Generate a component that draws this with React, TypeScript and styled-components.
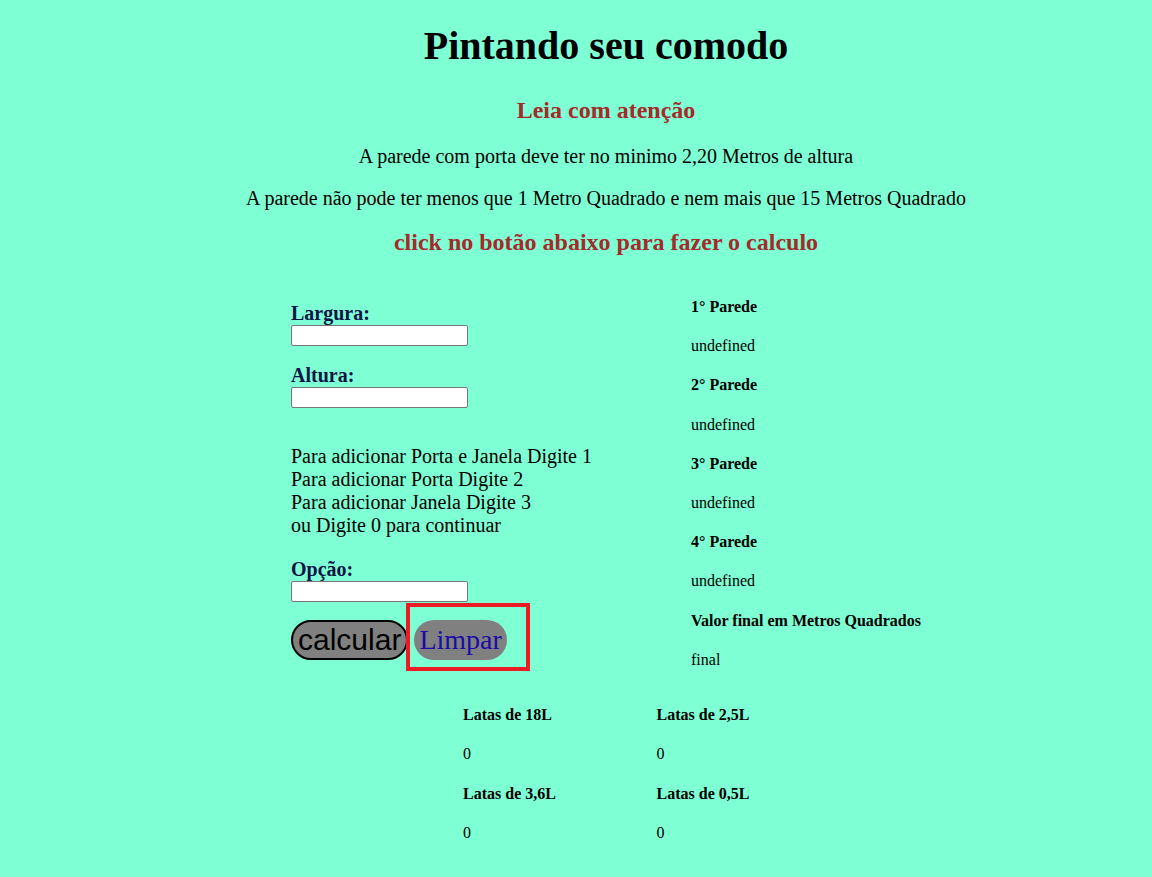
import React from "react";
import styled, { createGlobalStyle } from "styled-components";

const GlobalStyle = createGlobalStyle`
  html, body {
    margin: 0;
    padding: 0;
    background: #7fffd4;
  }
  body {
    font-family: "Liberation Serif", "Times New Roman", serif;
    color: #000;
  }
`;

const Page = styled.div`
  min-height: 877px;
  background: #7fffd4;
  padding-top: 23px;
  box-sizing: border-box;
`;

const Header = styled.header`
  padding-left: 60px;
  text-align: center;
`;

const Title = styled.h1`
  font-size: 40px;
  font-weight: bold;
  margin: 0;
  line-height: 46px;
`;

const Warn = styled.h2<{ $top: number }>`
  font-size: 24px;
  font-weight: bold;
  color: #a52a2a;
  margin: ${(p) => p.$top}px 0 0;
  line-height: 28px;
`;

const Note = styled.p<{ $top: number }>`
  font-size: 20px;
  margin: ${(p) => p.$top}px 0 0;
  line-height: 23px;
`;

const Main = styled.main`
  display: flex;
  align-items: flex-start;
  margin: 42px 0 0 291px;
`;

const FormColumn = styled.section`
  width: 400px;
  padding-top: 4px;
  display: flex;
  flex-direction: column;
  align-items: flex-start;
`;

const Label = styled.label<{ $top?: number }>`
  display: block;
  font-size: 20px;
  font-weight: bold;
  color: #0e1446;
  line-height: 23px;
  margin-top: ${(p) => p.$top ?? 0}px;
`;

const Field = styled.input`
  box-sizing: border-box;
  width: 177px;
  height: 21px;
  margin: 0;
  padding: 1px 2px;
  border: 1px solid #767676;
  border-radius: 2px;
  background: #fff;
  font-size: 13px;
`;

const Instructions = styled.div`
  margin-top: 37px;
  font-size: 20px;
  line-height: 23px;
`;

const ButtonRow = styled.div`
  position: relative;
  display: flex;
  gap: 6px;
  margin-top: 18px;
`;

const CalcButton = styled.button`
  box-sizing: border-box;
  height: 40px;
  margin: 0;
  padding: 0 5px;
  border: 2px solid #000;
  border-radius: 20px;
  background: #808080;
  color: #000;
  font-family: "Liberation Sans", Arial, sans-serif;
  font-size: 30px;
  line-height: 36px;
`;

const ClearButton = styled.button`
  box-sizing: border-box;
  height: 40px;
  margin: 0;
  padding: 0 5px;
  border: none;
  border-radius: 20px;
  background: #808080;
  color: #1a0ca6;
  font-family: "Liberation Serif", "Times New Roman", serif;
  font-size: 28px;
  line-height: 40px;
`;

const Highlight = styled.div`
  position: absolute;
  left: 115px;
  top: -17px;
  width: 124px;
  height: 68px;
  box-sizing: border-box;
  border: 4px solid #ed1c24;
  pointer-events: none;
`;

const ResultColumn = styled.section`
  display: flex;
  flex-direction: column;
  gap: 20.8px;
`;

const ResultTitle = styled.h4`
  font-size: 16px;
  font-weight: bold;
  margin: 0;
  line-height: 18.4px;
`;

const ResultValue = styled.p`
  font-size: 16px;
  margin: 0;
  line-height: 18.4px;
`;

const CansGrid = styled.section`
  display: grid;
  grid-template-columns: 193.5px 193.5px;
  row-gap: 20.8px;
  margin: 37px 0 0 463px;
`;

const walls = ["1° Parede", "2° Parede", "3° Parede", "4° Parede"];

export default function App() {
  return (
    <Page>
      <GlobalStyle />
      <Header>
        <Title>Pintando seu comodo</Title>
        <Warn $top={27}>Leia com atenção</Warn>
        <Note $top={21}>A parede com porta deve ter no minimo 2,20 Metros de altura</Note>
        <Note $top={19}>
          A parede não pode ter menos que 1 Metro Quadrado e nem mais que 15 Metros Quadrado
        </Note>
        <Warn $top={18}>click no botão abaixo para fazer o calculo</Warn>
      </Header>

      <Main>
        <FormColumn>
          <Label htmlFor="largura">Largura:</Label>
          <Field id="largura" type="text" />
          <Label htmlFor="altura" $top={18}>Altura:</Label>
          <Field id="altura" type="text" />
          <Instructions>
            Para adicionar Porta e Janela Digite 1
            <br />
            Para adicionar Porta Digite 2
            <br />
            Para adicionar Janela Digite 3
            <br />
            ou Digite 0 para continuar
          </Instructions>
          <Label htmlFor="opcao" $top={21}>Opção:</Label>
          <Field id="opcao" type="text" />
          <ButtonRow>
            <CalcButton type="button">calcular</CalcButton>
            <ClearButton type="button">Limpar</ClearButton>
            <Highlight />
          </ButtonRow>
        </FormColumn>

        <ResultColumn>
          {walls.map((w) => (
            <React.Fragment key={w}>
              <ResultTitle>{w}</ResultTitle>
              <ResultValue>undefined</ResultValue>
            </React.Fragment>
          ))}
          <ResultTitle>Valor final em Metros Quadrados</ResultTitle>
          <ResultValue>final</ResultValue>
        </ResultColumn>
      </Main>

      <CansGrid>
        <ResultTitle>Latas de 18L</ResultTitle>
        <ResultTitle>Latas de 2,5L</ResultTitle>
        <ResultValue>0</ResultValue>
        <ResultValue>0</ResultValue>
        <ResultTitle>Latas de 3,6L</ResultTitle>
        <ResultTitle>Latas de 0,5L</ResultTitle>
        <ResultValue>0</ResultValue>
        <ResultValue>0</ResultValue>
      </CansGrid>
    </Page>
  );
}
